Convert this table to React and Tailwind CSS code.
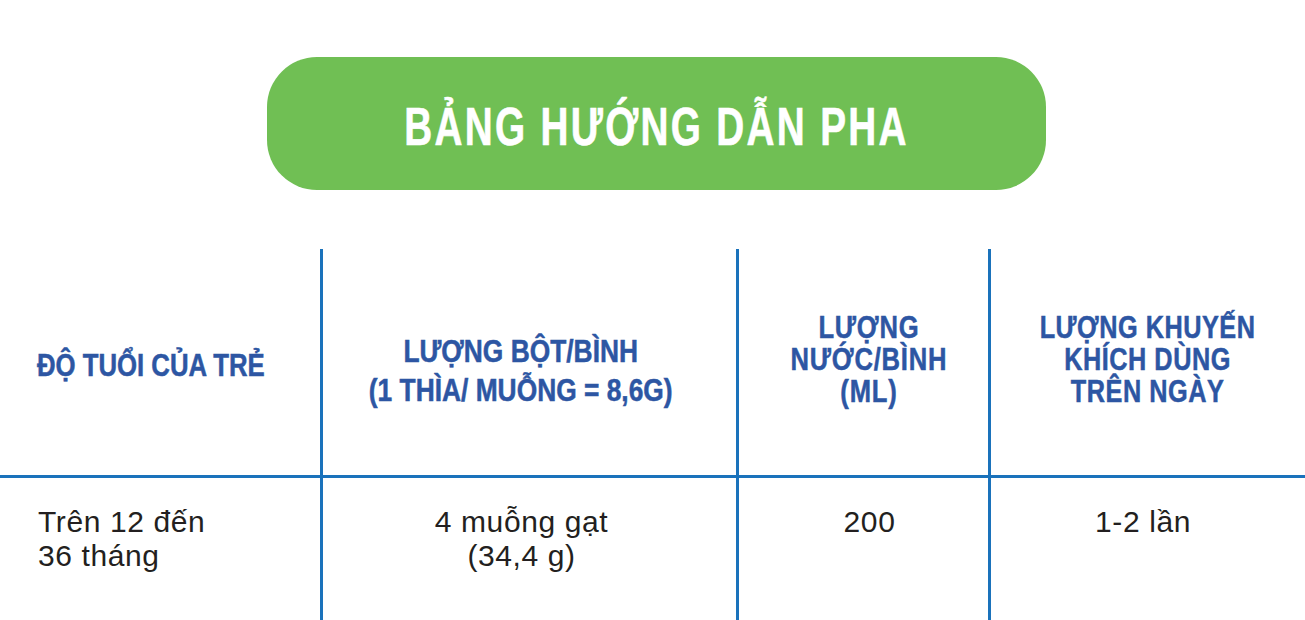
import React from "react";

const headFont = { fontFamily: '"Liberation Sans", Arial, sans-serif' };

export default function App() {
  return (
    <div
      className="w-[1305px] h-[620px] bg-white overflow-hidden flex flex-col"
      style={headFont}
    >
      {/* Title pill */}
      <div className="shrink-0 mt-[57px] ml-[267px] w-[779px] h-[133px] rounded-[50px] bg-[#70bf54] flex items-center justify-center pt-[6px]">
        <span className="inline-block text-white font-bold text-[53px] leading-none tracking-[0.06em] [transform:scaleX(0.73)] [-webkit-text-stroke:0.6px_white] whitespace-nowrap">
          BẢNG HƯỚNG DẪN PHA
        </span>
      </div>

      {/* Table */}
      <div className="shrink-0 mt-[59px] flex flex-col text-[#2d56a3]">
        {/* Header row */}
        <div className="shrink-0 flex h-[226px]">
          <div className="w-[323px] shrink-0 border-r-[3px] border-[#1a72bb] pl-[37px] pt-[100px]">
            <span className="inline-block origin-left [transform:scaleX(0.83)] [-webkit-text-stroke:0.5px_#2d56a3] font-bold text-[31px] leading-[34px] whitespace-nowrap">
              ĐỘ TUỔI CỦA TRẺ
            </span>
          </div>
          <div className="w-[416px] shrink-0 border-r-[3px] border-[#1a72bb] flex justify-center pr-[18px] pt-[83px]">
            <span className="inline-block text-center [transform:scaleX(0.85)] [-webkit-text-stroke:0.5px_#2d56a3] font-bold text-[31px] leading-[39px] whitespace-nowrap">
              LƯỢNG BỘT/BÌNH
              <br />
              (1 THÌA/ MUỖNG = 8,6G)
            </span>
          </div>
          <div className="w-[252px] shrink-0 border-r-[3px] border-[#1a72bb] flex justify-center pl-[10px] pt-[62px]">
            <span className="inline-block text-center [transform:scaleX(0.8)] [-webkit-text-stroke:0.5px_#2d56a3] font-bold text-[32px] leading-[32px] tracking-[0.03em] whitespace-nowrap">
              LƯỢNG
              <br />
              NƯỚC/BÌNH
              <br />
              (ML)
            </span>
          </div>
          <div className="flex-1 flex justify-center pt-[62px]">
            <span className="inline-block text-center [transform:scaleX(0.79)] [-webkit-text-stroke:0.5px_#2d56a3] font-bold text-[32px] leading-[32px] tracking-[0.02em] whitespace-nowrap">
              LƯỢNG KHUYẾN
              <br />
              KHÍCH DÙNG
              <br />
              TRÊN NGÀY
            </span>
          </div>
        </div>

        {/* Horizontal divider */}
        <div className="shrink-0 h-[3px] w-full bg-[#1a72bb]" />

        {/* Body row */}
        <div className="shrink-0 flex h-[150px] text-[#231f20] text-[30px] leading-[34px] tracking-[0.6px]">
          <div className="w-[323px] shrink-0 border-r-[3px] border-[#1a72bb] pl-[38px] pt-[27px]">
            Trên 12 đến
            <br />
            36 tháng
          </div>
          <div className="w-[416px] shrink-0 border-r-[3px] border-[#1a72bb] text-center pr-[16px] pt-[27px]">
            4 muỗng gạt
            <br />
            (34,4 g)
          </div>
          <div className="w-[252px] shrink-0 border-r-[3px] border-[#1a72bb] text-center pl-[12px] pt-[27px]">
            200
          </div>
          <div className="flex-1 text-center pr-[10px] pt-[27px]">1-2 lần</div>
        </div>
      </div>
    </div>
  );
}
